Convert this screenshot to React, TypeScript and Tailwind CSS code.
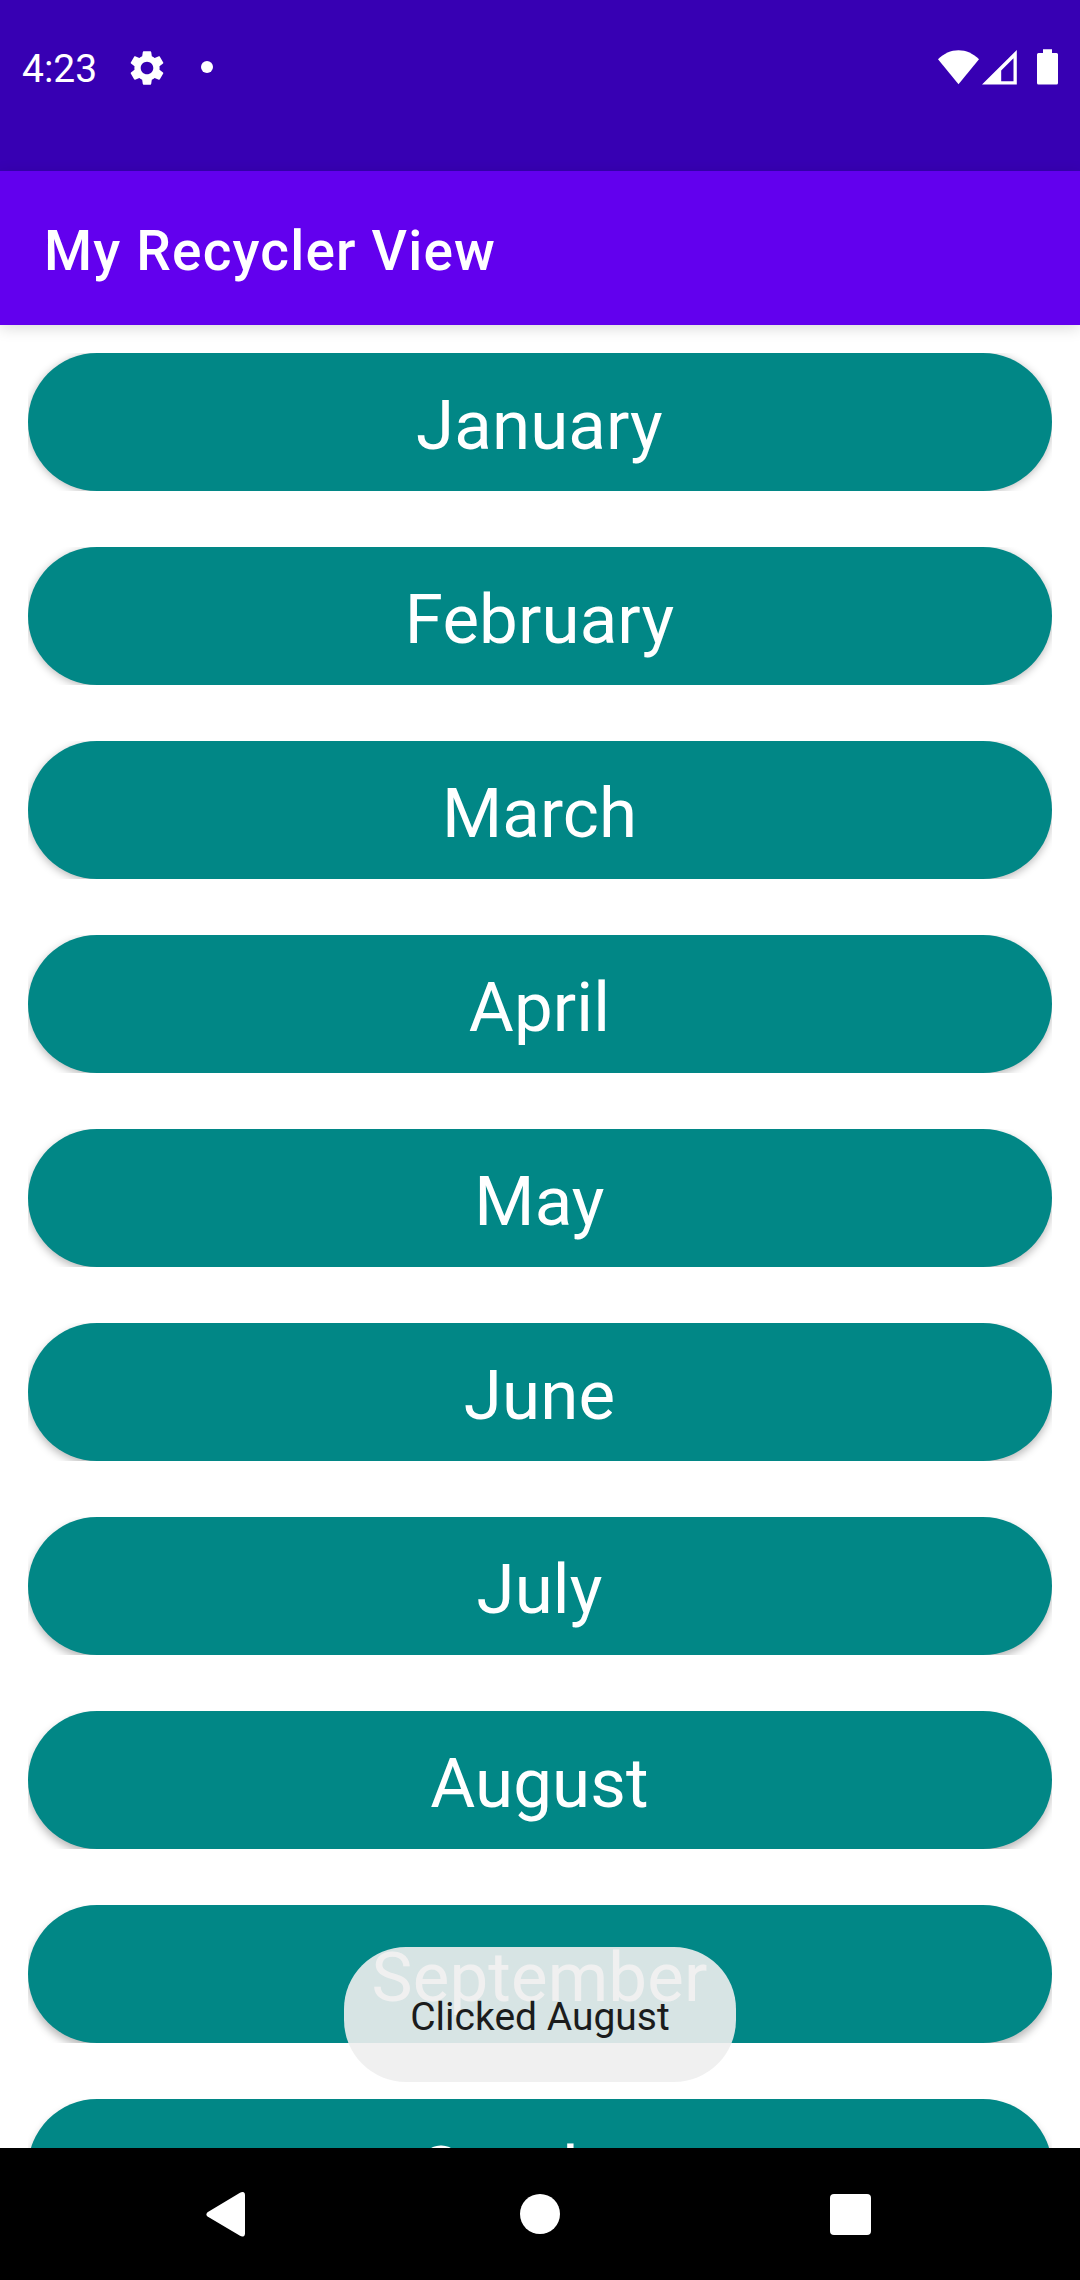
import React from "react";

const months = [
  "January",
  "February",
  "March",
  "April",
  "May",
  "June",
  "July",
  "August",
  "September",
  "October",
];

function StatusBar() {
  return (
    <header className="flex h-[171px] shrink-0 items-start bg-[#3700b3] pt-[44px]">
      <span className="ml-[22px] h-[48px] w-[76px] whitespace-nowrap text-[39px] leading-[51px] text-white">
        4:23
      </span>
      <svg className="ml-[27.500px] mt-[2.500px] size-[42px]" viewBox="0 0 24 24" fill="white">
        <path d="M19.14 12.94c.04-.3.06-.61.06-.94 0-.32-.02-.64-.07-.94l2.03-1.58c.18-.14.23-.41.12-.61l-1.92-3.32c-.12-.22-.37-.29-.59-.22l-2.39.96c-.5-.38-1.03-.7-1.62-.94l-.36-2.54c-.04-.24-.24-.41-.48-.41h-3.84c-.24 0-.43.17-.47.41l-.36 2.54c-.59.24-1.13.57-1.62.94l-2.39-.96c-.22-.08-.47 0-.59.22L2.74 8.87c-.12.21-.08.47.12.61l2.03 1.58c-.05.3-.09.63-.09.94s.02.64.07.94l-2.03 1.58c-.18.14-.23.41-.12.61l1.92 3.32c.12.22.37.29.59.22l2.39-.96c.5.38 1.03.7 1.62.94l.36 2.54c.05.24.24.41.48.41h3.84c.24 0 .44-.17.47-.41l.36-2.54c.59-.24 1.13-.56 1.62-.94l2.39.96c.22.08.47 0 .59-.22l1.92-3.32c.12-.22.07-.47-.12-.61l-2.01-1.58zM12 15.6c-1.98 0-3.6-1.62-3.6-3.6s1.62-3.6 3.6-3.6 3.6 1.62 3.6 3.6-1.62 3.6-3.6 3.6z" />
      </svg>
      <span className="ml-[33.500px] mt-[17px] size-[12px] rounded-full bg-white" />
      <div className="ml-auto mr-[22px] mt-[5px] flex items-start">
        <svg className="h-[36px] w-[41px]" viewBox="0 0 41 36" fill="white">
          <path d="M20.5 35.3 0 10.3C5.600 4.600 13 1.300 20.500 1.300S35.400 4.600 41 10.300Z" />
        </svg>
        <svg className="ml-[3px] h-[36px] w-[35px]" viewBox="0 0 35 36" fill="white">
          <path
            fillRule="evenodd"
            d="M0 35.500 34.800 1V35.500ZM19.200 21.500V32.200H31.500V9.300Z"
          />
        </svg>
        <svg className="ml-[20px] h-[36px] w-[21px]" viewBox="0 0 21 36" fill="white">
          <path d="M6 .3h9V4h4.500Q21 4 21 5.500V34Q21 35.500 19.500 35.500H1.500Q0 35.500 0 34V5.500Q0 4 1.500 4H6Z" />
        </svg>
      </div>
    </header>
  );
}

function MonthCard({ name, index }: { name: string; index: number }) {
  const drop = 1.5 + index * 0.45;
  return (
    <li className="h-[138px] shrink-0 overflow-hidden">
      <div
        className="flex h-full items-center justify-center rounded-[69px] bg-[#018786] pr-px pt-[7px] text-[69px] leading-[80px] tracking-[0.12px] text-white"
        style={{ boxShadow: `0 ${drop}px 8px rgba(0,0,0,0.28)` }}
      >
        {name}
      </div>
    </li>
  );
}

function NavBar() {
  return (
    <nav className="flex h-[132px] shrink-0 items-start bg-black pt-[43px]">
      <svg className="ml-[206px] h-[47px] w-[40px]" viewBox="0 0 40 47" fill="white">
        <path d="M34 1.800Q36 .6 37.800 1.300Q39 2 39 4V42.500Q39 44.500 37.800 45.200Q36 46 34 44.800L1.500 25.500Q-.8 23.500 1.500 21.200Z" />
      </svg>
      <span className="ml-[274px] mt-[3px] size-[40px] rounded-full bg-white" />
      <span className="ml-[270px] mt-[3px] size-[41px] rounded-[4px] bg-white" />
    </nav>
  );
}

export default function App() {
  return (
    <div className="relative flex h-[2280px] w-[1080px] flex-col overflow-hidden bg-white font-[Roboto,sans-serif]">
      <StatusBar />
      <div className="z-10 flex h-[154px] shrink-0 items-center bg-[#6200ee] pl-[44px] pt-[6px] shadow-[0_3px_14px_rgba(0,0,0,0.15)]">
        <h1 className="whitespace-nowrap text-[55px] font-medium leading-[64px] tracking-[1.18px] text-white">
          My Recycler View
        </h1>
      </div>
      <ul className="flex min-h-0 flex-1 flex-col gap-[56px] overflow-hidden px-[28px] pt-[28px]">
        {months.map((name, i) => (
          <MonthCard key={name} name={name} index={i} />
        ))}
      </ul>
      <NavBar />
      <div className="absolute left-[344px] top-[1947px] z-20 flex h-[135px] w-[392px] items-center justify-center whitespace-nowrap rounded-[62px] bg-[#eeeeee]/90 pt-[5px] text-[39px] leading-[46px] text-[#1b1c1c]">
        Clicked August
      </div>
    </div>
  );
}
